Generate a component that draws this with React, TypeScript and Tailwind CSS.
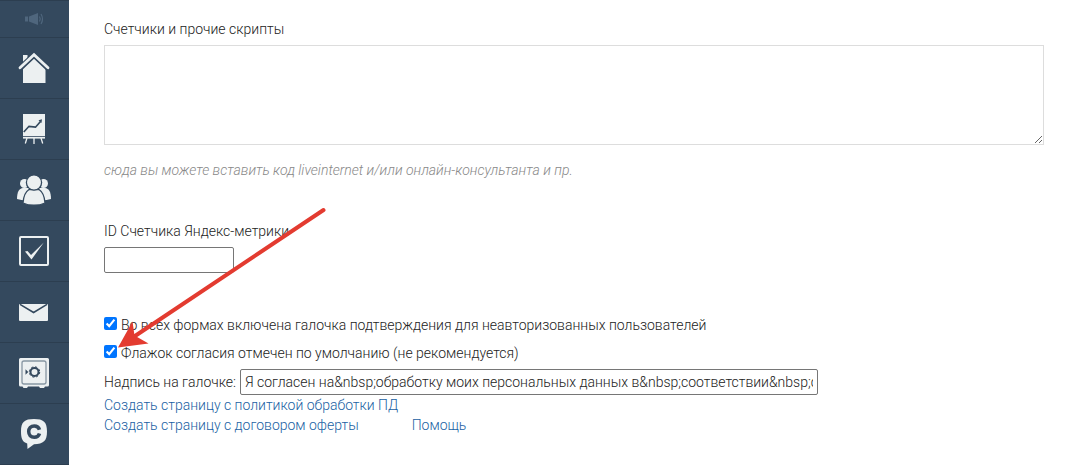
import type { ReactNode } from 'react';

const DARK = '#34495e';
const LIGHT = '#ecf0f1';

function Icon({ children }: { children: ReactNode }) {
  return (
    <svg width="35" height="34" viewBox="0 0 35 34" fill="none" aria-hidden="true">
      {children}
    </svg>
  );
}

const items: { label: string; icon: ReactNode }[] = [
  {
    label: 'Главная',
    icon: (
      <Icon>
        <path d="M6 4h4.500v4L6 12z" fill={LIGHT} />
        <path d="M17 6.500 28.500 17.500V32H6V17.500z" fill={LIGHT} />
        <path d="M3 17.200 17 4 31 17.200" stroke={DARK} strokeWidth="5.500" />
        <path d="M3 16.700 17 3.700 31 16.700" stroke={LIGHT} strokeWidth="2.800" strokeLinecap="round" />
      </Icon>
    ),
  },
  {
    label: 'Статистика',
    icon: (
      <Icon>
        <path d="M6 2h22v22H6z" fill={LIGHT} />
        <path d="M6.800 20 12 14.300 18.500 15.200 23.500 9.500" stroke={DARK} strokeWidth="1.700" />
        <path d="M21.500 8.300 25 7.300 24.500 11z" fill={DARK} />
        <path d="M6 25.700h22" stroke={LIGHT} strokeWidth="1.800" />
        <path d="M10 26 8.300 31.500M17 26v6M24 26l1.700 5.500" stroke={LIGHT} strokeWidth="1.300" />
      </Icon>
    ),
  },
  {
    label: 'Пользователи',
    icon: (
      <Icon>
        <circle cx="7.500" cy="10.500" r="4.500" fill={LIGHT} />
        <circle cx="26.500" cy="10.500" r="4.500" fill={LIGHT} />
        <path d="M0 26C0 19 2 15.500 6 15h22c4 .5 6 4 6 11-3 1-6 1.300-9 1.300H9C6 27.300 3 27 0 26z" fill={LIGHT} />
        <path d="M6 30c.5-7 2-11 6-13.500h10c4 2.500 5.500 6.500 6 13.500-6 3-16 3-22 0z" fill={LIGHT} stroke={DARK} strokeWidth="1.300" />
        <circle cx="17" cy="9.500" r="7.600" fill={LIGHT} stroke={DARK} strokeWidth="1.300" />
      </Icon>
    ),
  },
  {
    label: 'Задачи',
    icon: (
      <Icon>
        <rect x="3" y="3" width="28" height="28" rx="1" stroke={LIGHT} strokeWidth="2" />
        <path d="M8 17.500 10.500 17l3.500 4L26.800 8.500 14.500 25.500z" fill={LIGHT} />
      </Icon>
    ),
  },
  {
    label: 'Рассылки',
    icon: (
      <Icon>
        <rect x="2" y="9" width="29" height="17" rx="1" fill={LIGHT} />
        <path d="M3 9.300 16.600 17.500 30 9.300" stroke={DARK} strokeWidth="1.500" />
      </Icon>
    ),
  },
  {
    label: 'Финансы',
    icon: (
      <Icon>
        <path d="M3.500 2h27q1.500 0 1.500 1.500V29q0 1.500-1.500 1.500H28L27 32h-4l-1-1.500H11L10 32H6.500l-1-1.500h-2Q2 30.500 2 29V3.500Q2 2 3.500 2z" fill={LIGHT} />
        <rect x="5" y="5" width="24" height="23" rx="2" stroke="#8796a3" strokeWidth="1.300" />
        <circle cx="17.500" cy="16" r="4" stroke={DARK} strokeWidth="2" />
        <circle cx="17.500" cy="16" r="5.200" stroke={DARK} strokeWidth="1" strokeDasharray="2.200 1.880" />
        <path d="M8.500 13.200 11.300 16l-2.800 2.800z" fill={DARK} />
      </Icon>
    ),
  },
  {
    label: 'Чат',
    icon: (
      <Icon>
        <path d="M17 2c9.500 0 13 3 13 12.500S26.500 27 17 27.200L10.500 32l-.3-5.500C5.500 25 4 21.500 4 14.500 4 5 7.500 2 17 2z" fill={LIGHT} />
        <path d="M22.500 12.700C21.700 10 19.700 8.900 17.300 8.900c-3.500 0-5.600 2.300-5.600 5.700s2.100 5.700 5.600 5.700c2.400 0 4.400-1.100 5.200-3.800" stroke={DARK} strokeWidth="3.500" />
      </Icon>
    ),
  },
];

function Sidebar() {
  return (
    <nav className="w-[69px] shrink-0 border-t border-[#2c3e50] bg-[#34495e]">
      <a href="#news" aria-label="Новости" className="flex h-[37px] items-center justify-center border-b border-[#2c3e50]">
        <svg width="20" height="14" viewBox="0 0 20 14" fill="none" aria-hidden="true">
          <path d="M0 4.500h3v5H0zM4 4.500 13 1v12L4 9.500z" fill="#4f667d" />
          <path d="M14.500 4.500q1.500 2.500 0 5M16 2q3 5 0 10" stroke="#4f667d" strokeWidth="1.200" />
        </svg>
      </a>
      {items.map((item) => (
        <a key={item.label} href="#section" aria-label={item.label} className="flex h-[61px] items-center justify-center border-b border-[#2c3e50]">
          {item.icon}
        </a>
      ))}
    </nav>
  );
}

const check = 'm-0 mt-0.5 size-[13px] shrink-0 accent-[#0075ff]';
const link = 'text-[#1a5fa3]';

export default function App() {
  return (
    <div className="relative flex min-h-screen bg-white font-['Roboto','Noto_Sans',sans-serif] text-sm leading-5 font-light text-[#222]">
      <Sidebar />
      <main className="min-w-0 flex-1 pt-[19px] pr-[21px] pl-[35px]">
        <label htmlFor="scripts" className="block">Счетчики и прочие скрипты</label>
        <textarea id="scripts" className="mt-1.5 block h-[100px] w-full border border-[#ddd] bg-white p-1 outline-none" />
        <p className="mt-[15px] text-[#888] italic">сюда вы можете вставить код liveinternet и/или онлайн-консультанта и пр.</p>

        <label htmlFor="metrika" className="mt-[41px] block">ID Счетчика Яндекс-метрики</label>
        <input id="metrika" type="text" className="mt-1.5 block h-[26px] w-[130px] rounded-[2px] border border-[#767676] bg-white px-1 outline-none" />

        <label className="mt-[42px] flex gap-1">
          <input type="checkbox" defaultChecked className={check} />
          <span>Во всех формах включена галочка подтверждения для неавторизованных пользователей</span>
        </label>
        <label className="mt-2 flex gap-1">
          <input type="checkbox" defaultChecked className={check} />
          <span>Флажок согласия отмечен по умолчанию (не рекомендуется)</span>
        </label>
        <div className="mt-1.5 flex items-center gap-1">
          <label htmlFor="caption">Надпись на галочке:</label>
          <input
            id="caption"
            type="text"
            defaultValue={'Я согласен на&nbsp;обработку моих персональных данных в&nbsp;соответствии&nbsp;с&'}
            className="h-[26px] w-[578px] rounded-[2px] border border-[#767676] bg-white px-1 outline-none"
          />
        </div>
        <div><a href="#policy" className={link}>Создать страницу с политикой обработки ПД</a></div>
        <div className="flex gap-[53px]">
          <a href="#offer" className={link}>Создать страницу с договором оферты</a>
          <a href="#help" className={link}>Помощь</a>
        </div>
      </main>
      <svg className="pointer-events-none absolute top-[205px] left-[115px]" width="215" height="145" viewBox="0 0 215 145" aria-hidden="true">
        <path d="M208.500 5 20 131" stroke="#e33b30" strokeWidth="4" strokeLinecap="round" />
        <path d="M3 142.500 17.500 116.500 19.500 130.500 33.500 138.500z" fill="#e33b30" />
      </svg>
    </div>
  );
}
